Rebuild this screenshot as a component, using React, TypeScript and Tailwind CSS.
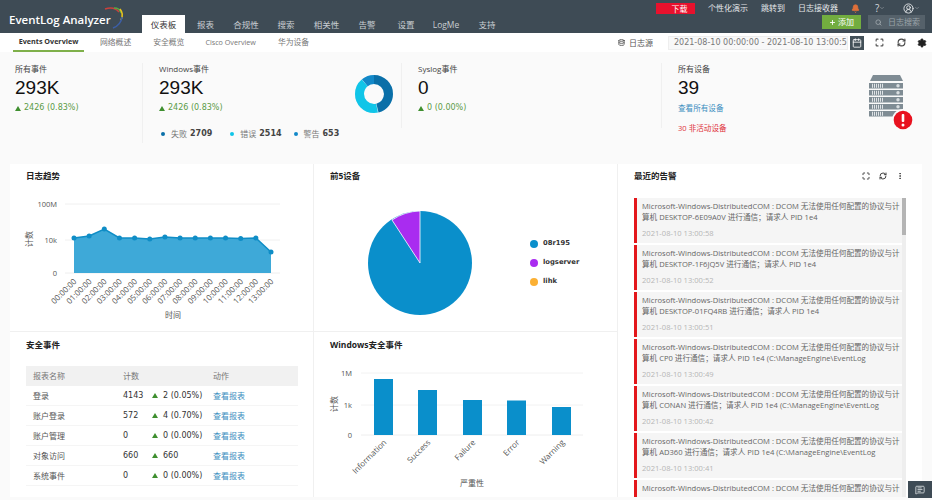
import { Bell, Calendar, ChevronDown, Database, EllipsisVertical, Maximize, MessageSquareText, Plus, RefreshCw, Search, Settings, CircleUserRound } from 'lucide-react';

const sans = "font-['Open_Sans','Noto_Sans_CJK_SC',sans-serif]";
const dv = "font-['DejaVu_Sans','Noto_Sans_CJK_SC',sans-serif]";

const tabs = [
    { label: '报表', w: 'w-[41px]' },
    { label: '合规性', w: 'w-[40px]' },
    { label: '搜索', w: 'w-[40px]' },
    { label: '相关性', w: 'w-[41px]' },
    { label: '告警', w: 'w-[40px]' },
    { label: '设置', w: 'w-[38px]' },
    { label: 'LogMe', w: 'w-[42px]' },
    { label: '支持', w: 'w-[40px]' },
];

const areaPoints = [238, 236, 229, 238, 238, 239, 237, 238, 238, 238, 238, 238.5, 238, 252];
const hours = ['00', '01', '02', '03', '04', '05', '06', '07', '08', '09', '10', '11', '12', '13'];

const rows = [
    { name: '登录', count: '4143', delta: '2 (0.05%)' },
    { name: '账户登录', count: '572', delta: '4 (0.70%)' },
    { name: '账户管理', count: '0', delta: '0 (0.00%)' },
    { name: '对象访问', count: '660', delta: '660' },
    { name: '系统事件', count: '0', delta: '0 (0.00%)' },
];

const alerts = [
    { host: 'DESKTOP-6E09A0V 进行通信；请求人 PID 1e4', time: '2021-08-10 13:00:58' },
    { host: 'DESKTOP-1F6JQ5V 进行通信；请求人 PID 1e4', time: '2021-08-10 13:00:52' },
    { host: 'DESKTOP-01FQ4RB 进行通信；请求人 PID 1e4', time: '2021-08-10 13:00:51' },
    { host: 'CP0 进行通信；请求人 PID 1e4 (C:\\ManageEngine\\EventLog', time: '2021-08-10 13:00:49' },
    { host: 'CONAN 进行通信；请求人 PID 1e4 (C:\\ManageEngine\\EventLog', time: '2021-08-10 13:00:42' },
    { host: 'AD360 进行通信；请求人 PID 1e4 (C:\\ManageEngine\\EventLog', time: '2021-08-10 13:00:41' },
];

const bars = [
    { label: 'Information', x: 374, y: 379 },
    { label: 'Success', x: 418, y: 390 },
    { label: 'Failure', x: 463, y: 400 },
    { label: 'Error', x: 507, y: 400.5 },
    { label: 'Warning', x: 552, y: 407 },
];

function Up() {
    return <span className="inline-block w-0 h-0 border-x-[3px] border-x-transparent border-b-[5px] border-b-[#3f8f2f]" />;
}

function Delta({ text }: { text: string }) {
    return (
        <div className={`flex items-center gap-[3px] mt-[3px] text-[8px] leading-3 text-[#5b9a46] ${dv}`}>
            <Up /> {text}
        </div>
    );
}

function Kpi({ title, value }: { title: string; value: string }) {
    return (
        <div>
            <div className="text-[8px] leading-3 text-[#444]">{title}</div>
            <div className="text-[19px] leading-[22px] mt-[2px] text-[#111] font-['Liberation_Sans',sans-serif]">{value}</div>
        </div>
    );
}

function AreaChart() {
    // x runs from 74 to 271 in page pixels, the svg starts at page x 10 and y 190
    const xs = areaPoints.map((_, i) => 64 + (i * 197) / 13);
    const line = areaPoints.map((y, i) => `${xs[i]},${y - 190}`).join(' ');
    return (
        <svg width="294" height="134" className="block">
            <line x1="55" x2="270" y1="14" y2="14" stroke="#f0f0f0" />
            <line x1="55" x2="270" y1="50" y2="50" stroke="#f0f0f0" />
            <line x1="55" x2="270" y1="83" y2="83" stroke="#eee" />
            <text x="47" y="17" textAnchor="end" fontSize="7.5" fill="#555">100M</text>
            <text x="47" y="53" textAnchor="end" fontSize="7.5" fill="#555">10k</text>
            <text x="47" y="86" textAnchor="end" fontSize="7.5" fill="#555">0</text>
            <text transform="translate(22,49) rotate(-90)" textAnchor="middle" fontSize="8" fill="#555">计数</text>
            <polygon points={`64,83 ${line} 261,83`} fill="#3ea9d8" />
            <polyline points={line} fill="none" stroke="#0f8dc6" strokeWidth="1.5" />
            {xs.map((x, i) => (
                <circle key={i} cx={x} cy={areaPoints[i] - 190} r="2.5" fill="#0f8dc6" />
            ))}
            {xs.map((x, i) => (
                <text key={i} transform={`translate(${x + 3},${92}) rotate(-45)`} textAnchor="end" fontSize="8" fill="#555">
                    {hours[i]}:00:00
                </text>
            ))}
            <text x="163" y="128" textAnchor="middle" fontSize="8" fill="#555">时间</text>
        </svg>
    );
}

function PieChart() {
    return (
        <div className="flex items-start">
            <svg width="198" height="104" viewBox="0 0 198 104" className="block">
                <circle cx="88" cy="52" r="52" fill="#0a8fcb" />
                <path d="M88 52 L60 9 A52 52 0 0 1 88 0 Z" fill="#a92cf0" stroke="#fff" strokeWidth="0.8" />
            </svg>
            <div className={`mt-[29px] flex flex-col gap-[11px] text-[6.8px] leading-[7.5px] font-bold text-[#333] ${dv}`}>
                <div className="flex items-center gap-[5px]"><span className="w-[8px] h-[8px] rounded-full bg-[#0a8fcb]" />08r195</div>
                <div className="flex items-center gap-[5px]"><span className="w-[8px] h-[8px] rounded-full bg-[#a92cf0]" />logserver</div>
                <div className="flex items-center gap-[5px]"><span className="w-[8px] h-[8px] rounded-full bg-[#fbb034]" />lihk</div>
            </div>
        </div>
    );
}

function BarChart() {
    // svg starts at page x 314 and y 363
    return (
        <svg width="304" height="130" className="block">
            <line x1="47" x2="269" y1="10" y2="10" stroke="#f2f2f2" />
            <line x1="47" x2="269" y1="42" y2="42" stroke="#f2f2f2" />
            <line x1="47" x2="269" y1="72" y2="72" stroke="#eee" />
            <text x="38" y="13" textAnchor="end" fontSize="7.5" fill="#555">1M</text>
            <text x="38" y="45" textAnchor="end" fontSize="7.5" fill="#555">1k</text>
            <text x="38" y="75" textAnchor="end" fontSize="7.5" fill="#555">0</text>
            <text transform="translate(23,41) rotate(-90)" textAnchor="middle" fontSize="8" fill="#555">计数</text>
            {bars.map((b) => (
                <g key={b.label}>
                    <rect x={b.x - 314} y={b.y - 363} width="19" height={435 - b.y} fill="#0a8fcb" />
                    <text transform={`translate(${b.x - 314 + 13},${80}) rotate(-45)`} textAnchor="end" fontSize="8" fill="#555">
                        {b.label}
                    </text>
                </g>
            ))}
            <text x="158" y="123" textAnchor="middle" fontSize="8" fill="#555">严重性</text>
        </svg>
    );
}

function ServerIcon() {
    return (
        <svg width="44" height="56" viewBox="0 0 44 56" className="block">
            <path d="M4 0 H31 L34 6 H1 Z" fill="#7f8c94" />
            {[8, 15, 22, 29, 36].map((y) => (
                <g key={y}>
                    <rect x="0" y={y} width="34" height="5.5" fill="#7f8c94" />
                    <line x1="3" x2="15" y1={y + 2.75} y2={y + 2.75} stroke="#dfe3e6" strokeWidth="4" strokeDasharray="1 1" />
                    <circle cx="29" cy={y + 2.75} r="1.7" fill="#d8dde0" />
                </g>
            ))}
            <circle cx="34" cy="45" r="11" fill="#fafafa" />
            <circle cx="34" cy="45" r="9.3" fill="#e8121f" />
            <rect x="32.7" y="39" width="2.6" height="8" rx="1" fill="#fff" />
            <circle cx="34" cy="50" r="1.5" fill="#fff" />
        </svg>
    );
}

function Logo() {
    return (
        <div className="relative h-[33px] w-[142px] shrink-0">
            <span className="absolute left-[9px] top-[13px] text-[11.5px] leading-[14px] font-semibold text-white">EventLog Analyzer</span>
            <svg width="28" height="28" viewBox="0 0 28 28" className="absolute left-[100px] top-[5px]">
                <path d="M5 4 Q14 1 19 7" fill="none" stroke="#c9413d" strokeWidth="1.5" />
                <path d="M14 3 Q20 3 21 8" fill="none" stroke="#55a646" strokeWidth="1.6" />
                <path d="M20 4 Q24 9 21 15" fill="none" stroke="#e5c21f" strokeWidth="1.6" />
                <path d="M22 12 Q21 20 13 23" fill="none" stroke="#3c5fa8" strokeWidth="1.5" />
            </svg>
        </div>
    );
}

export default function App() {
    return (
        <div className={`relative w-[932px] h-[500px] overflow-hidden bg-[#fafafa] ${sans}`}>
            {/* top bar */}
            <div className="flex h-[33px] bg-[#3e4b55]">
                <Logo />
                <div className="flex items-end">
                    <div className="w-[43px] h-[18px] bg-white text-[#333] text-[8.5px] leading-[20px] text-center">仪表板</div>
                    {tabs.map((t) => (
                        <div key={t.label} className={`${t.w} h-[18px] text-[#c9ced2] text-[8.5px] leading-[20px] text-center`}>{t.label}</div>
                    ))}
                </div>
                <div className="ml-auto w-[280px] flex flex-col items-end pr-[7px]">
                    <div className="flex items-center h-[15px] pt-[1px] w-full text-[8px] text-[#e4e7e9]">
                        <div className="ml-[4px] w-[39px] h-[11px] bg-[#e8112d] text-white text-center leading-[11px] pl-[8px]">下载</div>
                        <span className="ml-[13px]">个性化演示</span>
                        <span className="ml-[13px]">跳转到</span>
                        <span className="ml-[13px]">日志接收器</span>
                        <Bell className="ml-[13px] w-[9px] h-[9px] text-[#e0703a] fill-[#e0703a]" />
                        <span className="ml-[15px] text-[10px] text-[#d5d9dc]">?</span>
                        <ChevronDown className="w-[6px] h-[6px] text-[#aab1b6]" />
                        <CircleUserRound className="ml-[18px] w-[11px] h-[11px] text-[#e4e7e9]" />
                        <ChevronDown className="w-[6px] h-[6px] text-[#aab1b6]" />
                    </div>
                    <div className="flex gap-[7px]">
                        <div className="flex items-center justify-center gap-[2px] w-[39px] h-[14px] bg-[#72ad3f] text-white text-[8px]">
                            <Plus className="w-[7px] h-[7px]" strokeWidth={3} /> 添加
                        </div>
                        <div className="flex items-center gap-[6px] pl-[7px] w-[57px] h-[14px] bg-[#55616a] text-[#9aa3a9] text-[8px]">
                            <Search className="w-[7px] h-[7px]" strokeWidth={3} /> 日志搜索
                        </div>
                    </div>
                </div>
            </div>

            {/* sub nav */}
            <div className="flex items-center h-[19px] bg-white text-[7.8px] text-[#777] pl-[13px]">
                <div className="w-[71px] h-[19px] border-b-[2px] border-[#7fb04a] text-center leading-[17px] font-bold text-[#333] text-[7.2px]">Events Overview</div>
                <span className="ml-[16px]">网络概述</span>
                <span className="ml-[22px]">安全概览</span>
                <span className="ml-[21px] text-[7.2px]">Cisco Overview</span>
                <span className="ml-[22px]">华为设备</span>
                <div className="ml-auto flex items-center pr-[5px]">
                    <Database className="w-[7px] h-[7px] text-[#555]" strokeWidth={3} />
                    <span className="ml-[4px] mr-[15px] text-[#555] text-[8px]">日志源</span>
                    <div className="flex items-center w-[180px] h-[14px] bg-[#f8f8f8] border border-[#eee] pl-[5px] overflow-hidden whitespace-nowrap">
                        <span className={`text-[8px] text-[#777] ${dv}`}>2021-08-10 00:00:00 - 2021-08-10 13:00:5</span>
                    </div>
                    <div className="flex items-center justify-center w-[14px] h-[14px] ml-[2px] bg-[#445159]">
                        <Calendar className="w-[10px] h-[10px] text-white" />
                    </div>
                    <Maximize className="ml-[11px] w-[9px] h-[9px] text-[#555]" strokeWidth={3} />
                    <RefreshCw className="ml-[13px] w-[9px] h-[9px] text-[#444]" strokeWidth={3} />
                    <Settings className="ml-[11px] w-[10px] h-[10px] text-[#222] fill-[#222]" />
                </div>
            </div>

            {/* kpi strip */}
            <div className="flex h-[112px] pt-[11px]">
                <div className="w-[142px] pl-[15px]">
                    <Kpi title="所有事件" value="293K" />
                    <Delta text="2426 (0.83%)" />
                </div>
                <div className="relative w-[259px] h-[80px] pl-[16px] border-l border-[#f0f0f0]">
                    <Kpi title="Windows事件" value="293K" />
                    <Delta text="2426 (0.83%)" />
                    <div className="flex items-center mt-[14px] ml-[2px] text-[8px] leading-3 text-[#777]">
                        <span className="w-[4px] h-[4px] rounded-full bg-[#0a6fa8] mr-[6px]" />失败 <b className={`ml-[3px] text-[#444] ${dv}`}>2709</b>
                        <span className="w-[4px] h-[4px] rounded-full bg-[#10c5e8] ml-[18px] mr-[6px]" />错误 <b className={`ml-[3px] text-[#444] ${dv}`}>2514</b>
                        <span className="w-[4px] h-[4px] rounded-full bg-[#1288c8] ml-[12px] mr-[6px]" />警告 <b className={`ml-[3px] text-[#444] ${dv}`}>653</b>
                    </div>
                    <svg width="38" height="38" viewBox="0 0 38 38" className="absolute left-[212px] top-[12px]">
                        <g transform="rotate(-90 19 19)" fill="none" strokeWidth="9">
                            <circle cx="19" cy="19" r="14.5" stroke="#cfeaf5" />
                            <circle cx="19" cy="19" r="14.5" stroke="#1288c8" strokeDasharray="10 91.1" strokeDashoffset="-80.6" />
                            <circle cx="19" cy="19" r="14.5" stroke="#10c5e8" strokeDasharray="38.2 91.1" strokeDashoffset="-42.2" />
                            <circle cx="19" cy="19" r="14.5" stroke="#0a6fa8" strokeDasharray="41.7 91.1" />
                        </g>
                    </svg>
                </div>
                <div className="w-[260px] h-[65px] pl-[16px] border-l border-[#f0f0f0]">
                    <Kpi title="Syslog事件" value="0" />
                    <Delta text="0 (0.00%)" />
                </div>
                <div className="relative w-[271px] h-[65px] pl-[16px] border-l border-[#f0f0f0]">
                    <Kpi title="所有设备" value="39" />
                    <div className="mt-[3px] text-[7.6px] leading-3 text-[#3b8ec0]">查看所有设备</div>
                    <div className="mt-[8px] text-[7.6px] leading-3 text-[#e0333c]">30 非活动设备</div>
                    <div className="absolute left-[207px] top-[12px]"><ServerIcon /></div>
                </div>
            </div>

            {/* panels */}
            <div className="grid grid-cols-[304px_304px_304px] grid-rows-[168px_165px] ml-[10px] w-[912px] bg-white">
                <div className="border-r border-b border-[#f0f0f0] pl-[16px] pt-[6px]">
                    <h3 className="text-[8.5px] leading-3 font-bold text-[#222]">日志趋势</h3>
                    <div className="ml-[-16px] mt-[8px]"><AreaChart /></div>
                </div>
                <div className="border-r border-b border-[#f0f0f0] pl-[16px] pt-[6px]">
                    <h3 className="text-[8.5px] leading-3 font-bold text-[#222]">前5设备</h3>
                    <div className="ml-[2px] mt-[29px]"><PieChart /></div>
                </div>
                <div className="row-span-2 pl-[16px] pt-[6px] overflow-hidden">
                    <div className="flex items-center w-[273px]">
                        <h3 className="text-[8.5px] leading-3 font-bold text-[#222]">最近的告警</h3>
                        <Maximize className="ml-auto w-[8px] h-[8px] text-[#444]" strokeWidth={3} />
                        <RefreshCw className="ml-[9px] w-[8px] h-[8px] text-[#444]" strokeWidth={3} />
                        <EllipsisVertical className="ml-[9px] mr-[3px] w-[8px] h-[8px] text-[#444]" strokeWidth={3} />
                    </div>
                    <div className="relative mt-[16px] w-[272px]">
                        <div className="flex flex-col gap-[2px] w-[268px]">
                            {alerts.map((a, i) => (
                                <div key={i} className="h-[45px] shrink-0 border-l-[3px] border-[#e3171b] bg-[#f5f5f5] pl-[5px] pt-[3px] text-[7.6px] leading-[11px] text-[#666]">
                                    <div className="whitespace-nowrap">Microsoft-Windows-DistributedCOM : DCOM 无法使用任何配置的协议与计</div>
                                    <div className="whitespace-nowrap">算机 {a.host}</div>
                                    <div className="mt-[5px] text-[#b5b5b5]">{a.time}</div>
                                </div>
                            ))}
                            <div className="h-[17px] shrink-0 border-l-[3px] border-[#e3171b] bg-[#f5f5f5] pl-[5px] pt-[3px] text-[7.6px] leading-[11px] text-[#666] whitespace-nowrap">
                                Microsoft-Windows-DistributedCOM : DCOM 无法使用任何配置的协议与计
                            </div>
                        </div>
                        <div className="absolute right-0 top-0 w-[4px] h-[300px] bg-[#eee]">
                            <div className="w-[4px] h-[37px] bg-[#b4b4b4]" />
                        </div>
                    </div>
                </div>
                <div className="border-r border-[#f0f0f0] pl-[16px] pt-[7px]">
                    <h3 className="text-[8.5px] leading-3 font-bold text-[#222]">安全事件</h3>
                    <div className="mt-[15px] w-[272px] text-[8px] text-[#555]">
                        <div className="flex items-center h-[20px] bg-[#f1f1f1] text-[#777]">
                            <span className="w-[97px] pl-[7px]">报表名称</span>
                            <span className="w-[90px]">计数</span>
                            <span>动作</span>
                        </div>
                        {rows.map((r) => (
                            <div key={r.name} className="flex items-center h-[20px] border-b border-[#f5f5f5]">
                                <span className="w-[97px] pl-[7px]">{r.name}</span>
                                <span className={`w-[29px] text-[#333] ${dv}`}>{r.count}</span>
                                <span className={`flex items-center gap-[5px] w-[61px] text-[#333] ${dv}`}><Up />{r.delta}</span>
                                <span className="text-[#3b8ec0]">查看报表</span>
                            </div>
                        ))}
                    </div>
                </div>
                <div className="border-r border-[#f0f0f0] pl-[16px] pt-[7px]">
                    <h3 className="text-[8.5px] leading-3 font-bold text-[#222]">Windows安全事件</h3>
                    <div className="ml-[-16px] mt-[12px]"><BarChart /></div>
                </div>
            </div>

            <div className="absolute right-0 bottom-[2px] flex items-center justify-center w-[24px] h-[17px] bg-[#3e4b55]">
                <MessageSquareText className="w-[10px] h-[10px] text-[#dfe3e5]" />
            </div>
        </div>
    );
}
